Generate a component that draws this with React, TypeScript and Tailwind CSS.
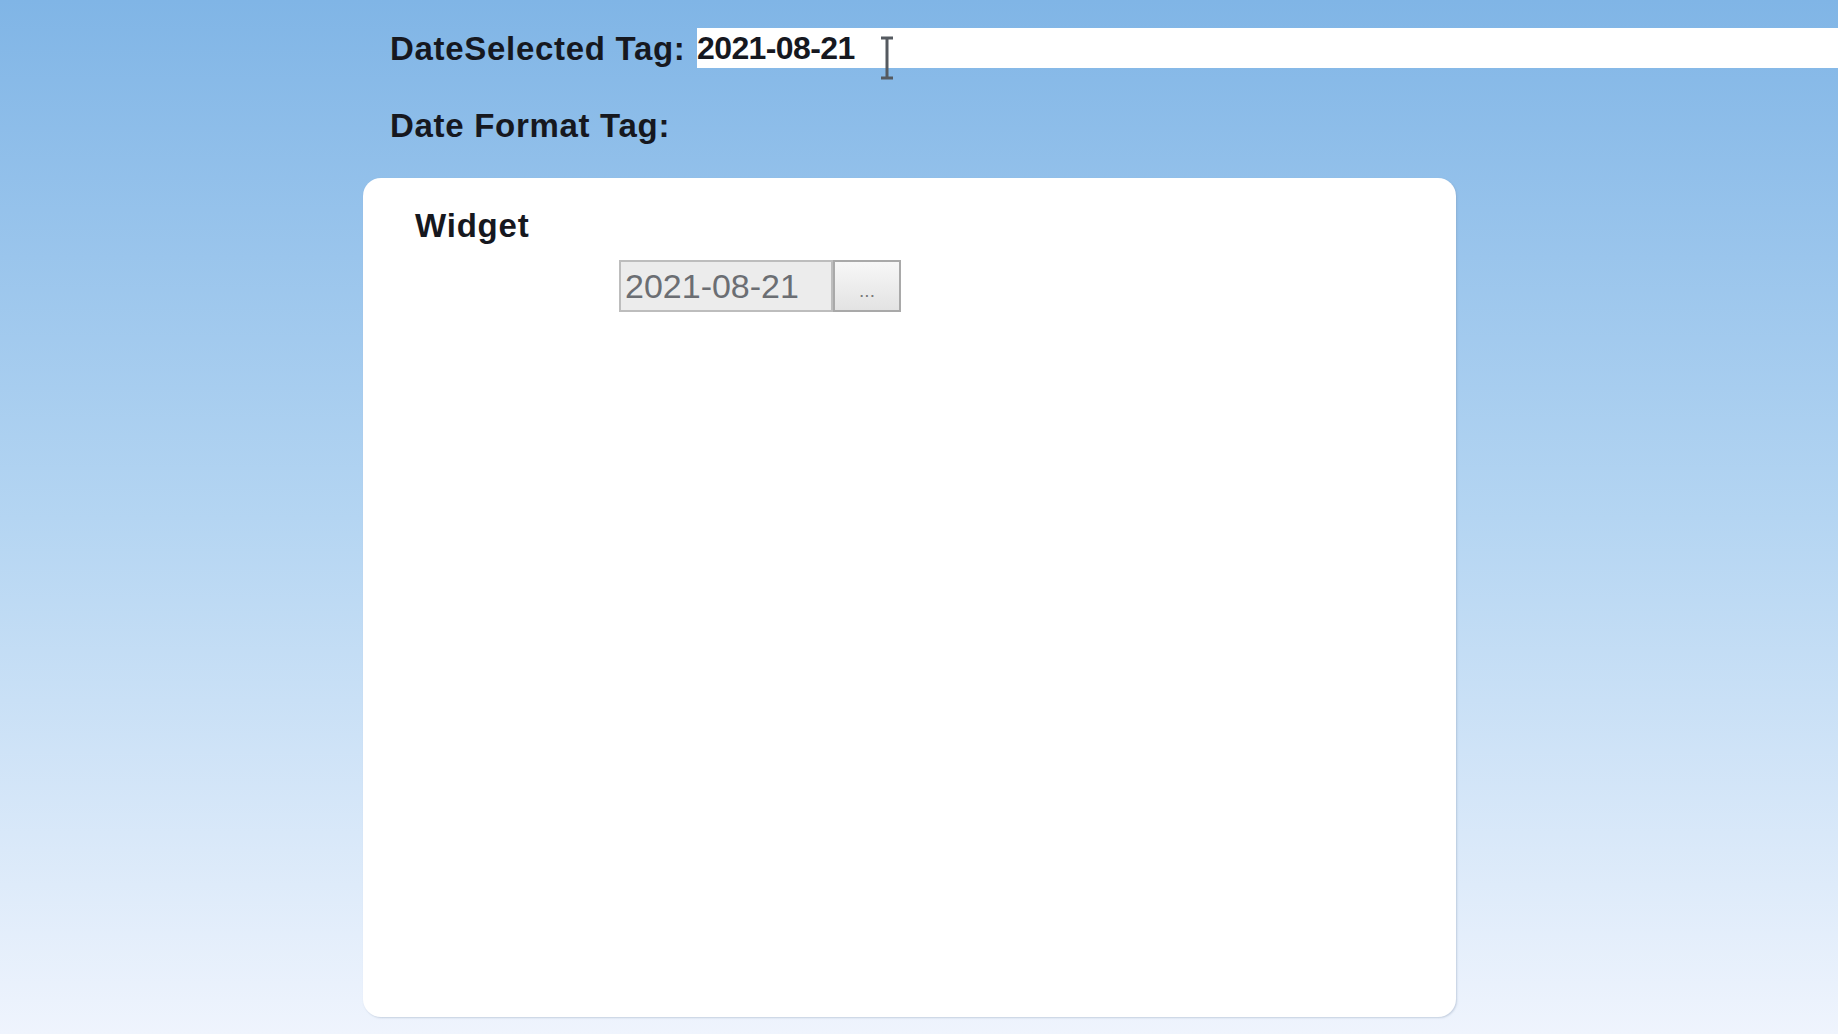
const IBeam = () => (
  <svg width="16" height="44" viewBox="0 0 16 44" className="absolute left-[879px] top-[36px]">
    <path d="M2 2h12M8 2v40M2 42h12" stroke="#555a60" strokeWidth="3" fill="none" />
  </svg>
);

const App: React.FC = () => {
  return (
    <div className="relative h-[1034px] w-full overflow-hidden bg-gradient-to-b from-[#80b5e6] via-[#b4d5f2] to-[#eff4fd] pt-[28px] font-['Liberation_Sans',Arial,sans-serif] text-[#16181f]">
      <div className="flex h-[40px] items-center pl-[390px]">
        <span className="w-[307px] shrink-0 text-[33px] font-bold leading-none tracking-[0.7px]">DateSelected Tag:</span>
        <div className="flex h-full flex-1 items-center bg-white">
          <span className="text-[32px] font-bold leading-none tracking-[-0.6px]">2021-08-21</span>
        </div>
      </div>

      <div className="mt-[37px] flex h-[40px] items-center pl-[390px]">
        <span className="text-[33px] font-bold leading-none tracking-[0.7px]">Date Format Tag:</span>
      </div>

      <div className="ml-[363px] mt-[33px] h-[839px] w-[1093px] rounded-[18px] bg-white pl-[52px] pt-[30px] shadow-[1px_1px_2px_rgba(120,140,170,0.35)]">
        <div className="text-[33px] font-bold leading-[36px] tracking-[0.8px]">Widget</div>
        <div className="ml-[204px] mt-[16px] flex h-[52px]">
          <div className="flex w-[214px] items-center border-2 border-[#bdbdbd] bg-[#ececec] pl-[4px] text-[34px] leading-none text-[#6b6e73]">
            2021-08-21
          </div>
          <button className="flex w-[68px] items-end justify-center border-2 border-[#a9a9a9] bg-gradient-to-b from-[#f7f7f7] to-[#e3e3e3] pb-[10px] text-[19px] leading-none text-[#7a7a7a]">
            ...
          </button>
        </div>
      </div>

      <IBeam />
    </div>
  );
};

export default App;
